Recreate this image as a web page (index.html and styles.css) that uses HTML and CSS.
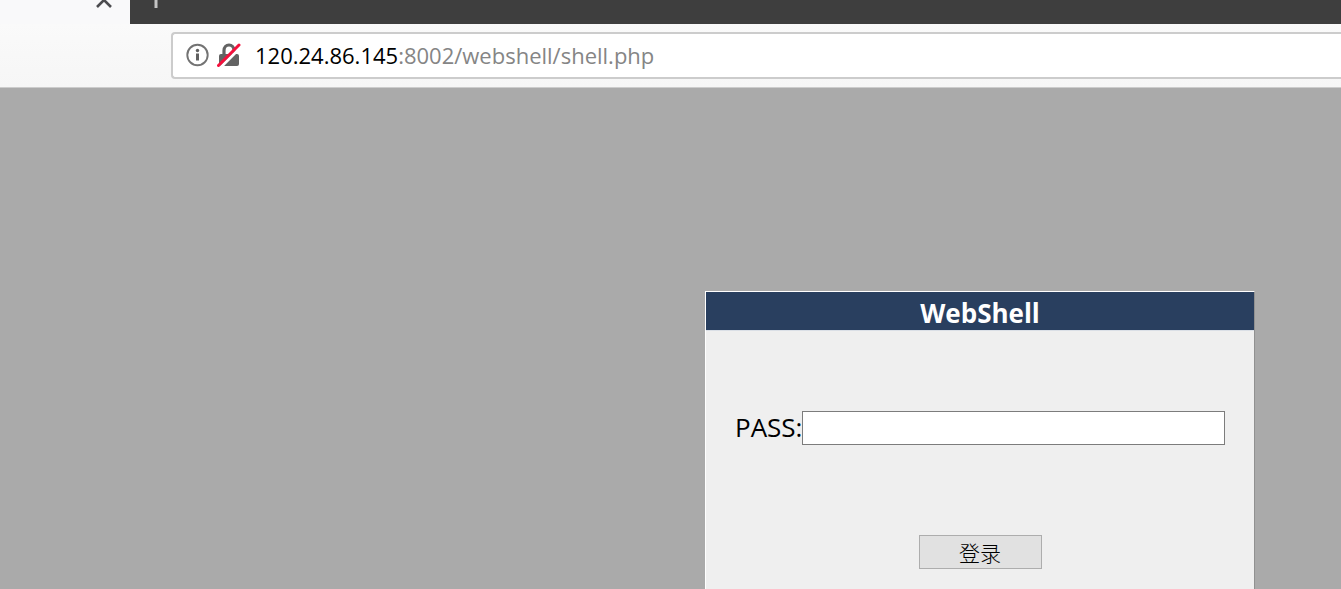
FILE: index.html
```
<!DOCTYPE html>
<html lang="zh-CN">
<head>
<meta charset="utf-8">
<title>WebShell</title>
<link rel="stylesheet" href="styles.css">
</head>
<body>
<header class="browser">
  <div class="tabs">
    <div class="tab">
      <button class="tab-button" type="button" aria-label="Close tab">
        <svg width="18" height="10" viewBox="0 0 18 10"><path d="M2 7 9 0l7 7" fill="none" stroke="#4c4c4f" stroke-width="2.600"/></svg>
      </button>
    </div>
    <button class="tab-button new-tab" type="button" aria-label="New tab">
      <svg width="8" height="10" viewBox="0 0 8 10"><path d="M4 0v8" stroke="#c4c4c4" stroke-width="3"/></svg>
    </button>
  </div>
  <div class="toolbar">
    <div class="address">
      <svg width="24" height="24" viewBox="0 0 24 24"><circle cx="11.500" cy="12" r="10.200" fill="none" stroke="#737373" stroke-width="1.900"/><circle cx="11.500" cy="7.500" r="1.700" fill="#606060"/><path d="M11.500 10.500v7" stroke="#606060" stroke-width="3"/></svg>
      <svg class="lock" width="24" height="26" viewBox="0 0 24 26"><path d="M7 13V8.500a5 5.500 0 0 1 10 0V13" fill="none" stroke="#636363" stroke-width="3.200"/><rect x="2" y="12" width="20" height="12" rx="2" fill="#636363"/><path d="M3 26 24 5" stroke="#fff" stroke-width="3"/><path d="M1.500 23.500 22 3" stroke="#f5103c" stroke-width="3" stroke-linecap="round"/></svg>
      <div class="url"><span class="host">120.24.86.145</span>:8002/webshell/shell.php</div>
    </div>
  </div>
</header>
<main class="page">
  <form class="dialog">
    <h1 class="title">WebShell</h1>
    <div class="field">
      <label for="pass">PASS:</label>
      <input class="pass" id="pass" name="pass" type="password">
    </div>
    <button class="login" type="submit">登录</button>
  </form>
</main>
</body>
</html>
```
FILE: styles.css
```
* {
  box-sizing: border-box;
}

body {
  margin: 0;
  min-height: 100vh;
  display: flex;
  flex-direction: column;
  background: #aaa;
  color: #000;
  font-family: "Open Sans", "Noto Sans CJK SC", sans-serif;
}

.browser {
  background: #f9f9fa;
  border-bottom: 1px solid #ccc;
}

.tabs {
  display: flex;
  align-items: flex-start;
  background: #3e3e3e;
}

.tab {
  display: flex;
  justify-content: flex-end;
  width: 130px;
  height: 24px;
  padding-right: 17px;
  background: #f9f9fa;
}

.tab-button {
  display: flex;
  height: 10px;
  padding: 0;
  border: 0;
  background: none;
}

.new-tab {
  margin-left: 22px;
}

.toolbar {
  padding: 8px 0 8px 171px;
  background: linear-gradient(#fafafa, #f6f6f6);
}

.address {
  display: flex;
  align-items: center;
  height: 47px;
  padding: 0 0 2px 13px;
  border: 2px solid #ccc;
  border-right: 0;
  border-radius: 4px 0 0 4px;
  background: #fff;
}

.lock {
  margin-left: 7px;
}

.url {
  margin-left: 14px;
  color: #858585;
  font-size: 22px;
  line-height: 32px;
  white-space: nowrap;
}

.host {
  color: #000;
}

.page {
  flex: 1;
  display: flex;
  padding: 203px 0 0 705px;
}

.dialog {
  display: flex;
  flex-direction: column;
  align-items: center;
  width: 550px;
  border: 1px solid #fff;
  border-right-color: #919191;
  border-bottom: 0;
  background: #efefef;
}

.title {
  align-self: stretch;
  margin: 0;
  padding: 5px 0 0;
  border-bottom: 1px solid #dadfe6;
  background: #293f5f;
  color: #fff;
  font-size: 26px;
  line-height: 33px;
  text-align: center;
}

.field {
  align-self: stretch;
  display: flex;
  align-items: center;
  margin-top: 80px;
  padding: 0 29px;
  font-size: 26px;
  line-height: 32px;
}

.field label {
  padding-bottom: 2px;
}

.pass {
  flex: 1;
  min-width: 0;
  height: 34px;
  border: 1px solid #7c7c7c;
  background: #fff;
  font-size: 22px;
}

.login {
  width: 123px;
  height: 34px;
  margin-top: 90px;
  padding: 0;
  border: 1px solid #adadad;
  background: #e1e1e1;
  color: #000;
  font-family: "Noto Sans CJK SC", sans-serif;
  font-size: 21px;
  font-weight: 300;
  line-height: 30px;
}
```
